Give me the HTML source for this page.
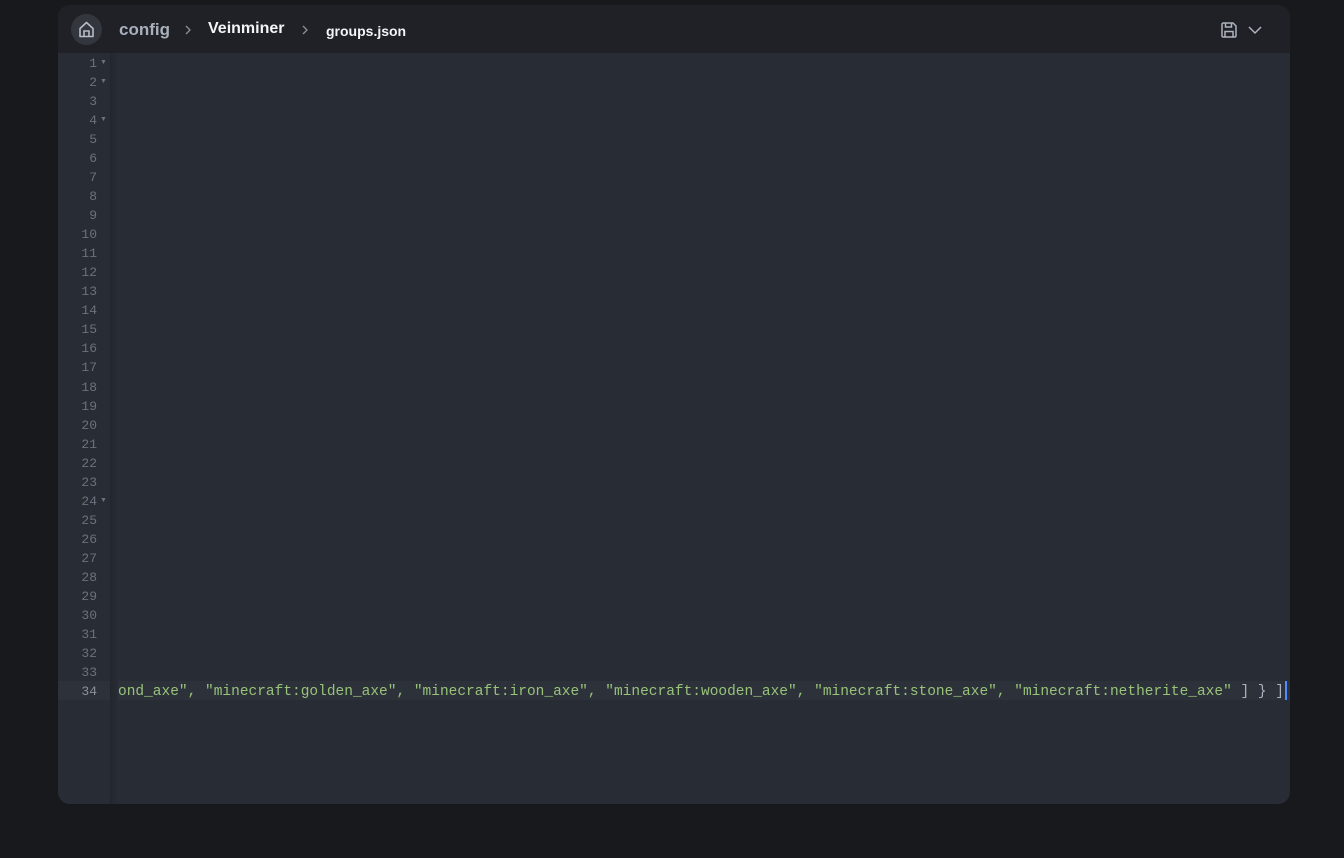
<!DOCTYPE html>
<html><head><style>
body{margin:0;width:1344px;height:858px;background:#18191c;overflow:hidden;font-family:"Liberation Sans",sans-serif}
.panel{position:absolute;left:58px;top:5px;width:1232px;height:799px;border-radius:12px;background:#282c34;overflow:hidden}
.hdr{position:absolute;left:0;top:0;width:100%;height:48px;background:#1f2126}
.home{position:absolute;left:13px;top:9px;width:31px;height:31px;border-radius:50%;background:#33363c}
.crumb{position:absolute;top:15px;font-size:16px;font-weight:bold}
.gut{position:absolute;left:0;top:48px;width:52px;bottom:0;background:#282c34}
.shadow{position:absolute;left:52px;top:48px;width:8px;bottom:0;background:linear-gradient(90deg,#23262d,#282c34)}
.ln{position:absolute;left:0;width:39px;text-align:right;font:13px "Liberation Mono",monospace;color:#6b717d;height:19px;line-height:19px}
.fold{position:absolute;left:42px;font-size:7px;color:#6b717d}
.act{position:absolute;left:0;top:676px;width:1232px;height:19px;background:#2c313a}
.code{position:absolute;right:6px;top:631px;height:19px;line-height:19px;font:14.5px "Liberation Mono",monospace;color:#98c379;white-space:pre}
</style></head><body>
<div class="panel">
<div class="hdr">
<div class="home"><svg width="31" height="31" viewBox="0 0 31 31"><path d="M9 14.5L15.5 8.5L22 14.5V22.5H9Z" fill="none" stroke="#b8bcc4" stroke-width="1.6" stroke-linejoin="round"/><path d="M13 22.5V17H18V22.5" fill="none" stroke="#b8bcc4" stroke-width="1.6"/></svg></div>
<div class="crumb" style="left:61px;color:#a9b0bb;font-size:17px;top:15px">config</div>
<svg style="position:absolute;left:125px;top:19px" width="10" height="12" viewBox="0 0 10 12"><path d="M3 2L7 6L3 10" fill="none" stroke="#8a9099" stroke-width="1.3"/></svg>
<div class="crumb" style="left:150px;color:#f2f4f7">Veinminer</div>
<svg style="position:absolute;left:242px;top:19px" width="10" height="12" viewBox="0 0 10 12"><path d="M3 2L7 6L3 10" fill="none" stroke="#8a9099" stroke-width="1.3"/></svg>
<div class="crumb" style="left:268px;color:#f2f4f7;font-size:14px;top:18px">groups.json</div>
<svg style="position:absolute;left:1161px;top:15px" width="20" height="20" viewBox="0 0 20 20"><path d="M3 4.5Q3 3 4.5 3H14L17 6V15.5Q17 17 15.5 17H4.5Q3 17 3 15.5Z" fill="none" stroke="#aeb4bd" stroke-width="1.5"/><path d="M6.5 3V7H12.5V3M6 17V11.5H14V17" fill="none" stroke="#aeb4bd" stroke-width="1.5"/></svg>
<svg style="position:absolute;left:1189px;top:18px" width="16" height="14" viewBox="0 0 16 14"><path d="M2 4L8 10L14 4" fill="none" stroke="#aeb4bd" stroke-width="1.5"/></svg>
</div>
<div class="act"></div>
<div class="gut"></div>
<div style="position:absolute;left:0;top:676px;width:52px;height:19px;background:#2c313a"></div>
<div class="shadow"></div>
<div id="nums"></div>
<div style="position:absolute;left:58px;top:48px;right:0;bottom:0;overflow:hidden">
<div class="code">ond_axe", "minecraft:golden_axe", "minecraft:iron_axe", "minecraft:wooden_axe", "minecraft:stone_axe", "minecraft:netherite_axe" <span style="color:#abb2bf">] } ]</span></div>
<div style="position:absolute;right:3px;top:628px;width:2px;height:19px;background:#528bff"></div>
</div>
<script>
var h='';for(var i=1;i<=34;i++){var t=48+(i-1)*19.03+1;h+='<div class="ln" style="top:'+t+'px;'+(i==34?'color:#8a909b':'')+'">'+i+'</div>';if(i==1||i==2||i==4||i==24)h+='<div class="fold" style="top:'+(t+5)+'px">&#9660;</div>';}
document.getElementById('nums').innerHTML=h;
</script>
</div>
</body></html>
